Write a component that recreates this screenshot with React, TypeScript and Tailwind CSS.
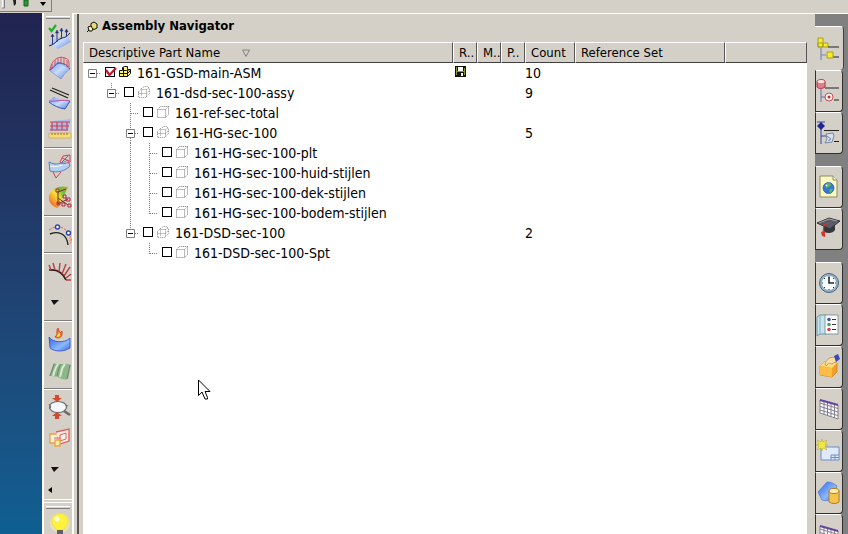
import React from "react";

type IconProps = { children: React.ReactNode; size?: "sm" | "lg" };

function Icon({ children, size = "lg" }: IconProps) {
  return (
    <svg
      viewBox={size === "lg" ? "0 0 24 24" : "0 0 14 14"}
      className={size === "lg" ? "block h-6 w-6 shrink-0 overflow-visible" : "block h-[14px] w-[14px] shrink-0"}
      fill="none"
      aria-hidden="true"
    >
      {children}
    </svg>
  );
}

/* ---------- toolbar icons ---------- */

const ExamineIcon = () => (
  <Icon>
    <path d="M1 19l6-5 12-5 4 8-13 7z" fill="url(#blueSurface)" />
    <path d="M1 21c6-1 8-7 13-8s5-2 8-5" stroke="#222" />
    <path d="M4.500 20V11M9 17V7M13.500 14V5M18.500 12V6" stroke="#2a3d8a" />
    <path d="M3 11.500L4.500 9 6 11.500zM7.500 8L9 5l1.500 3zM12 6l1.500-3L15 6zM17 7l1.500-3L20 7z" fill="#23307c" stroke="#23307c" strokeWidth=".5" />
    <path d="M1 3l2.500 3L8 0" stroke="#22b024" strokeWidth="2.200" />
  </Icon>
);

const CombIcon = () => (
  <Icon>
    <path d="M1 14c4-2 5-6 9-8l12 7c-4 2-6 6-9 10z" fill="url(#blueSurface)" stroke="#6d86d6" strokeWidth=".6" />
    <path d="M2 14C3 5 10-1 17 2c4 1 4 3 4 9M4 13V8M7 10V4M10 8V2M13 8V1M16 9V2M19 11V4" stroke="#cf4f66" />
    <path d="M2 14c4-2 5-6 9-7 5 0 8 2 11 6" stroke="#4058b8" />
  </Icon>
);

const StripesIcon = () => (
  <Icon>
    <path d="M4 1l17 7M2 3l18 8" stroke="#222" strokeWidth="1.300" />
    <path d="M1 14l5-4c6 3 10 3 16 4l-5 8C11 21 5 19 1 14z" fill="url(#blueSurface)" />
    <path d="M1 14c7 1 13-2 21 0" stroke="#b04ca8" />
    <path d="M1 15c5 4 10 6 16 7l5-8" stroke="#3654b8" />
  </Icon>
);

const RulerSurfaceIcon = () => (
  <Icon>
    <path d="M1 13L5 3l18-2-3 12z" fill="#a9bbe6" />
    <path d="M2 4h20M2 12h18M4 4v8M9 4v8M14 4v8M19 4v8M2 8h19" stroke="#d04354" strokeWidth="1.200" />
    <path d="M1 15h22v5H1z" fill="#f4dd76" stroke="#d2a83c" strokeWidth=".7" />
    <path d="M4 15v2M7 15v2M10 15v2M13 15v2M16 15v2M19 15v2" stroke="#9c6b20" />
  </Icon>
);

const SheetGaugeIcon = () => (
  <Icon>
    <path d="M1 7c7 4 13 1 19-2l2 6c-5 5-12 7-20 5z" fill="#b3d2f2" stroke="#5c7fc8" />
    <path d="M2 11c7 2 12-1 19-4" stroke="#fff" />
    <path d="M5 17l3 6 5-6M12 7l3-6 7-1v7l-7 2zM14 3l7 3M20 1l-6 6" stroke="#c84457" />
  </Icon>
);

const RainbowIcon = () => (
  <Icon>
    <path d="M1 9C4 2 11-1 20 1l-5 11-5 10C4 21 0 16 1 9z" fill="url(#heat)" />
    <path d="M10 5v13l10-5M10 12l10 7M10 6l8-3" stroke="#632" />
    <path d="M8 3h3v3H8zM9 16h3v3H9zM15 9h3v3h-3zM18 12h4v3h-4zM14 17h3v3h-3zM20 18h3v3h-3z" stroke="#b32a3d" />
  </Icon>
);

const CurveIcon = () => (
  <Icon>
    <path d="M1 7c8-6 17-4 22 8v5" stroke="#dd6a62" strokeDasharray="3 1" />
    <path d="M2 11c10-4 17 1 18 11" stroke="#1c2420" strokeWidth="1.400" />
    <circle cx="9.500" cy="4" r="2" fill="#fff" stroke="#3241ae" strokeWidth="1.400" />
    <circle cx="20.500" cy="10" r="2" fill="#fff" stroke="#3241ae" strokeWidth="1.400" />
    <path d="M22 14v7" stroke="#eda142" strokeDasharray="2 1" />
  </Icon>
);

const PeakIcon = () => (
  <Icon>
    <path d="M1 10c8-1 14 3 17 10" stroke="#2b1816" strokeWidth="1.600" />
    <path d="M3 10L1 5M7 10L5 3M11 12l1-9M14 14l4-10M16 16l6-9M18 18l5-4M18 20h5" stroke="#bb3e3e" strokeWidth="1.400" />
  </Icon>
);

const FlameSheetIcon = () => (
  <Icon>
    <path d="M1 9c3 5 15 7 21 1v10c-6 4-15 4-20 0z" fill="url(#deepBlue)" stroke="#2b4ed4" strokeWidth=".8" />
    <path d="M10 0c-3 4 1 5-3 9 5 3 8-1 7-6l-2 2z" fill="#f17a20" stroke="#c3361a" strokeWidth=".7" />
    <path d="M9 9c0-3 2-3 2-5 2 3 1 5-2 5z" fill="#ffe05a" />
  </Icon>
);

const GreenSheetIcon = () => (
  <Icon>
    <path d="M1 17C3 14 4 8 6 4c5 3 10-1 17 2l-3 14c-6 2-10-4-19-3z" fill="#8fb58b" />
    <path d="M5 17c2-6 2-8 5-12M12 18c2-6 1-9 5-13" stroke="#d7ecd2" strokeWidth="2" />
    <path d="M2 17C4 12 5 8 6 5M9 17c1-5 2-9 4-12M19 20l3-14" stroke="#557f58" strokeWidth=".8" />
  </Icon>
);

const LensIcon = () => (
  <Icon>
    <path d="M16 15l6 4" stroke="#6a6a6a" strokeWidth="2.400" />
    <ellipse cx="10" cy="11" rx="8.500" ry="5.500" fill="#f4f8fb" stroke="#65706f" strokeWidth="1.200" />
    <path d="M7-1h4v3h3L9 6 4 2h3zM7 23h4v-3h3l-5-4-5 4h3z" fill="#d8482d" />
    <path d="M1 8l2 3-2 2M17 9l3 1" stroke="#676" />
  </Icon>
);

const SectionsIcon = () => (
  <Icon>
    <path d="M2 7h8v9H2z" fill="#f9f0e6" stroke="#e2a344" strokeWidth="1.300" />
    <path d="M8 5l13-3v12l-9 3" fill="#fbe9df" stroke="#dc5f58" strokeWidth="1.300" />
    <path d="M12 8l6-2v6l-6 2zM6 11h7" fill="#f7f0ea" stroke="#d46b60" />
    <path d="M7 13h5v6H7z" fill="#fae6b8" stroke="#eaa53c" strokeWidth="1.300" />
  </Icon>
);

const BulbIcon = () => (
  <Icon>
    <circle cx="12" cy="10" r="10" fill="#fff79a" opacity=".45" />
    <path d="M8 17c0-3-4-4-4-9a8 7.500 0 0116 0c0 5-4 6-4 9z" fill="#fff23f" stroke="#eadf35" strokeWidth=".7" />
    <circle cx="9" cy="6" r="2.500" fill="#fffde0" />
    <path d="M9 17h6v4H9z" fill="#5d5f64" />
    <path d="M10 22h4" stroke="#333" strokeWidth="2" />
  </Icon>
);

const DownArrow = () => (
  <svg viewBox="0 0 24 24" className="block h-6 w-6" aria-hidden="true">
    <path d="M3 9h8l-5 5z" fill="#111" />
  </svg>
);

/* ---------- resource bar icons ---------- */

const AssemblyTabIcon = () => (
  <Icon>
    <path d="M1 1h5v9H1zM1 6h10v4H1zM6 6v4" fill="#f4ec2d" stroke="#a8a11c" />
    <path d="M11 10h11M16 20h6" stroke="#222" strokeWidth="1.200" />
    <path d="M4 11v12M4 18h5" stroke="#7c86b4" strokeWidth="1.200" />
    <path d="M10 15h6v6h-6z" fill="#f4ec2d" stroke="#a8a11c" />
  </Icon>
);

const ConstraintTabIcon = () => (
  <Icon>
    <path d="M1 2c3-2 6-2 8 0v6c-3 2-6 2-8 0z" fill="#e0808a" stroke="#a43443" />
    <ellipse cx="5" cy="2.500" rx="3.500" ry="1.500" fill="#ffe4e4" />
    <path d="M9 9h14M18 21h5" stroke="#222" />
    <path d="M5 10v13M5 18h4" stroke="#6570ac" />
    <circle cx="13" cy="18" r="4" fill="#fff3f0" stroke="#c94c50" />
    <circle cx="13" cy="18" r="1.500" fill="#ba3037" />
  </Icon>
);

const PartTabIcon = () => (
  <Icon>
    <path d="M1 1h8M5 1v22M5 15h5" stroke="#3c46a0" />
    <path d="M5 1l4 4-4 4-4-4z" fill="#1f2394" />
    <path d="M8 9.500h15M18 20.500h5" stroke="#222" />
    <path d="M10 13l7-1 1 3-2 6-7 1 2-4z" fill="#d8e0f0" stroke="#7986a0" />
    <path d="M11 15l4 3-3 2" stroke="#7986a0" />
  </Icon>
);

const WebPageIcon = () => (
  <Icon>
    <path d="M4 1h13l4 4v17H4z" fill="#fbf9c2" stroke="#8b8a64" />
    <path d="M17 1v4h4" fill="#fff" stroke="#8b8a64" />
    <circle cx="12.500" cy="13" r="5.500" fill="#3976cf" stroke="#28509b" strokeWidth=".7" />
    <path d="M9 10c3-3 6-2 6 0s-4 1-4 4zM14 14l3 0-2 4-2-1z" fill="#55b766" />
    <circle cx="10.500" cy="10.500" r="1" fill="#d9f4ff" />
  </Icon>
);

const GraduateIcon = () => (
  <Icon>
    <path d="M7 9l1 6c5 2 9 1 11-2V7z" fill="#34383c" />
    <path d="M1 6l12-5 11 3-10 8z" fill="#575d64" stroke="#30353b" />
    <path d="M3 6l10-4 8 2" stroke="#a0a6ab" />
    <path d="M13 6L8 8l-1 8" stroke="#d8342f" strokeWidth="1.200" />
    <path d="M5 15l4-1v6l-3-1z" fill="#d8342f" />
  </Icon>
);

const ClockIcon = () => (
  <Icon>
    <circle cx="13" cy="12" r="9.500" fill="#8fb4cf" stroke="#4c6478" />
    <circle cx="13" cy="12" r="7.500" fill="#fbfdff" stroke="#7190a6" strokeWidth=".6" />
    <path d="M13 6v6h5" stroke="#202832" strokeWidth="1.600" />
    <path d="M13 5v1M13 18v1M6 12h1M19 12h1M8 7l1 1M18 7l-1 1M8 17l1-1M18 17l-1-1" stroke="#2d3b4c" />
  </Icon>
);

const RolesIcon = () => (
  <Icon>
    <path d="M1 4l3-2h6v19H4l-3 2z" fill="#c6e3ec" stroke="#52849a" strokeWidth=".8" />
    <path d="M4 2v19" stroke="#87aebd" />
    <path d="M9 2h13v19H9z" fill="#fff" stroke="#65859b" strokeWidth=".8" />
    <circle cx="13" cy="6.500" r="1.800" fill="#494fb8" />
    <circle cx="13" cy="11.500" r="1.800" fill="#3da65d" />
    <circle cx="13" cy="16.500" r="1.800" fill="#d04150" />
    <path d="M16 6.500h4M16 11.500h4M16 16.500h4" stroke="#333" />
  </Icon>
);

const HandBoxIcon = () => (
  <Icon>
    <path d="M4 11l4-4 13 1v9l-5 5-12-2z" fill="#f0a028" stroke="#c47a18" strokeWidth=".7" />
    <path d="M4 11l4-4 13 1-5 5z" fill="#ffd97a" />
    <path d="M4 11l12 2v9L4 20z" fill="#fbbd45" />
    <path d="M9 8l4-5 6-1 2 4-5 3-3-1-3 3z" fill="#fbdca6" stroke="#c18a45" strokeWidth=".7" />
    <path d="M18 1l4-2 2 5-4 3z" fill="#354bb6" />
  </Icon>
);

const GridIcon = () => (
  <Icon>
    <path d="M4 3l18 5v14L4 16z" fill="#fafafe" stroke="#84808f" />
    <path d="M4 6l18 5.500M4 9.500l18 5.500M4 13l18 5.500M8 4v14M11.500 5v14M15 6v14M18.500 7v14" stroke="#84808f" />
    <path d="M4 3l18 5" stroke="#6444a0" strokeWidth="2" />
  </Icon>
);

const NewSheetIcon = () => (
  <Icon>
    <path d="M5 8h18v13H5z" fill="#e1eafb" stroke="#6e8cc5" />
    <path d="M15 16h8M15 16v5M15 18.500h8M19 16v5" stroke="#6e8cc5" />
    <path d="M6 0l1 3 4-2-2 4 3 1-3 1 2 4-4-2-1 3-1-3-4 2 2-4-3-1 3-1-2-4 4 2z" fill="#eee842" stroke="#aca628" strokeWidth=".5" />
  </Icon>
);

const ShapesIcon = () => (
  <Icon>
    <path d="M2 11l9-10c5 0 7 2 10 4l-5 13c-4 2-7 2-10 1z" fill="url(#deepBlue)" stroke="#4b77cd" strokeWidth=".7" />
    <path d="M13 10v11c3 2 7 2 10 0V10z" fill="#f6c44e" stroke="#b17e20" />
    <ellipse cx="18" cy="10" rx="5" ry="2.500" fill="#fff0ae" stroke="#b17e20" />
  </Icon>
);

/* ---------- tree icons ---------- */

const AssemblyIcon = () => (
  <Icon size="sm">
    <path d="M1.500 5.500h3v-3l2-1h3v3h3v4l-3 3h-8z" fill="#fff56b" stroke="#111" />
    <path d="M1.500 8.500h8M5.500 2.500v9M5.500 5.500h3l4-1M9.500 8.500l3-3M9.500 5.500v6" stroke="#111" />
  </Icon>
);

const GhostAssemblyIcon = () => (
  <Icon size="sm">
    <path d="M1.500 6.500l3-3 3-2h3l2 2v5l-4 4h-7zM1.500 8.500h7M4.500 3.500v8M5.500 4.500h4v7M9.500 4.500l3-2M9.500 8.500l3-3" stroke="#888" strokeDasharray="1 1" />
  </Icon>
);

const GhostPartIcon = () => (
  <Icon size="sm">
    <path d="M1.500 4.500h8v8h-8zM1.500 4.500l3-3h8l-3 3M12.500 1.500v8l-3 3" stroke="#777" strokeDasharray="1 1" />
  </Icon>
);

const SaveIcon = () => (
  <svg viewBox="0 0 11 11" className="ml-[2px] block h-[11px] w-[11px]" aria-label="Modified" role="img">
    <path d="M0 0h11v11H0z" fill="#111" />
    <path d="M1 1h1v8H1zM9 2h1v7H9zM2 5h7v1H2z" fill="#8b9a20" />
    <path d="M3 1h5v4H3zM6 7h2v3H6z" fill="#fff" />
  </svg>
);

/* ---------- data ---------- */

const toolGroups = [
  [
    { label: "Examine Geometry", icon: <ExamineIcon /> },
    { label: "Surface Comb", icon: <CombIcon /> },
    { label: "Reflection", icon: <StripesIcon /> },
    { label: "Section Measure", icon: <RulerSurfaceIcon /> },
  ],
  [
    { label: "Gap Check", icon: <SheetGaugeIcon /> },
    { label: "Face Analysis", icon: <RainbowIcon /> },
  ],
  [{ label: "Curve Analysis", icon: <CurveIcon /> }],
  [
    { label: "Curvature Comb", icon: <PeakIcon /> },
    { label: "More curve tools", icon: <DownArrow /> },
  ],
  [
    { label: "Draft Analysis", icon: <FlameSheetIcon /> },
    { label: "Sheet Analysis", icon: <GreenSheetIcon /> },
  ],
  [
    { label: "Inspect", icon: <LensIcon /> },
    { label: "Sections", icon: <SectionsIcon /> },
    { label: "More tools", icon: <DownArrow /> },
  ],
];

const tabGroups = [
  [
    { label: "Constraint Navigator", icon: <ConstraintTabIcon /> },
    { label: "Part Navigator", icon: <PartTabIcon /> },
  ],
  [
    { label: "Internet Explorer", icon: <WebPageIcon /> },
    { label: "Training", icon: <GraduateIcon /> },
  ],
  [
    { label: "History", icon: <ClockIcon /> },
    { label: "Roles", icon: <RolesIcon /> },
    { label: "Reuse Library", icon: <HandBoxIcon /> },
    { label: "Sheets", icon: <GridIcon /> },
    { label: "New Sheet", icon: <NewSheetIcon /> },
    { label: "Shapes", icon: <ShapesIcon /> },
    { label: "Tables", icon: <GridIcon /> },
  ],
];

// One guide letter per indent step: "." empty, "|" line, "T" branch, "L" last branch,
// "r" root box, "e" box on the last branch, "b" box with siblings below.
type Row = { name: string; guides: string; kind: "root" | "asm" | "part"; count?: number };

const rows: Row[] = [
  { name: "161-GSD-main-ASM", guides: "r", kind: "root", count: 10 },
  { name: "161-dsd-sec-100-assy", guides: ".e", kind: "asm", count: 9 },
  { name: "161-ref-sec-total", guides: "..T", kind: "part" },
  { name: "161-HG-sec-100", guides: "..b", kind: "asm", count: 5 },
  { name: "161-HG-sec-100-plt", guides: "..|T", kind: "part" },
  { name: "161-HG-sec-100-huid-stijlen", guides: "..|T", kind: "part" },
  { name: "161-HG-sec-100-dek-stijlen", guides: "..|T", kind: "part" },
  { name: "161-HG-sec-100-bodem-stijlen", guides: "..|L", kind: "part" },
  { name: "161-DSD-sec-100", guides: "..e", kind: "asm", count: 2 },
  { name: "161-DSD-sec-100-Spt", guides: "...L", kind: "part" },
];

const guidePaths: Record<string, string> = {
  ".": "",
  "|": "M9.5 0V20",
  T: "M9.5 0V20M10 10.5H18",
  L: "M9.5 0V11M10 10.5H18",
  r: "M14 10.5H18",
  e: "M9.5 0V6M14 10.5H18",
  b: "M9.5 0V6M9.5 15V20M14 10.5H18",
};

function Guide({ type }: { type: string }) {
  const drawing = (
    <svg viewBox="0 0 19 20" className="block h-5 w-[19px]" fill="none" aria-hidden="true">
      <path d={guidePaths[type]} stroke="#808080" strokeDasharray="1 1" />
      {"reb".includes(type) && (
        <>
          <path d="M5.500 6.500h8v8h-8z" fill="#fff" stroke="#808080" />
          <path d="M7 10.500h5" stroke="#000" />
        </>
      )}
    </svg>
  );
  if ("reb".includes(type)) {
    return <button type="button" aria-label="Collapse" className="shrink-0">{drawing}</button>;
  }
  return <span className="shrink-0">{drawing}</span>;
}

function TreeRow({ row }: { row: Row }) {
  return (
    <tr className="h-5">
      <td className="p-0">
        <div className="flex h-5 items-center">
          {row.guides.split("").map((g, i) => (
            <Guide key={i} type={g} />
          ))}
          <label className="flex items-center">
            <span className="relative ml-[3px] w-[13px] shrink-0 pb-[3px]">
              <input
                type="checkbox"
                defaultChecked={row.kind === "root"}
                className="block h-[10px] w-[10px] appearance-none border border-black bg-white"
              />
              {row.kind === "root" && (
                <svg viewBox="0 0 12 12" className="pointer-events-none absolute top-0 left-0 h-3 w-3" fill="none" aria-hidden="true">
                  <path d="M1 3l3.500 5L11 1" stroke="#c01828" strokeWidth="2.200" />
                </svg>
              )}
            </span>
            <span className="mr-[5px] pb-[3px]">
              {row.kind === "root" && <AssemblyIcon />}
              {row.kind === "asm" && <GhostAssemblyIcon />}
              {row.kind === "part" && <GhostPartIcon />}
            </span>
            <span className="whitespace-nowrap">{row.name}</span>
          </label>
        </div>
      </td>
      <td className="p-0 pb-[3px]">{row.kind === "root" && <SaveIcon />}</td>
      <td className="p-0" />
      <td className="p-0" />
      <td className="p-0">{row.count}</td>
      <td className="p-0" />
      <td className="p-0" />
    </tr>
  );
}

const headCell =
  "h-[21px] overflow-hidden whitespace-nowrap border-t border-r border-b border-l border-t-white border-r-[#555] border-b-[#404040] border-l-white bg-[#d4d0c8] p-0 pl-[5px] text-left text-[13px] font-normal leading-[18px]";

function NavigatorTable() {
  return (
    <table className="w-full table-fixed border-separate border-spacing-0">
      <colgroup>
        <col className="w-[370px]" />
        <col className="w-6" />
        <col className="w-6" />
        <col className="w-6" />
        <col className="w-[50px]" />
        <col className="w-[150px]" />
        <col />
      </colgroup>
      <thead>
        <tr>
          <th className={headCell}>
            <span className="flex items-center gap-[22px]">
              Descriptive Part Name
              <svg viewBox="0 0 8 8" className="h-2 w-2" fill="none" aria-hidden="true">
                <path d="M.5 1h7L4 7.500z" stroke="#808080" />
              </svg>
            </span>
          </th>
          <th className={headCell}>R..</th>
          <th className={headCell}>M..</th>
          <th className={headCell}>P..</th>
          <th className={headCell}>Count</th>
          <th className={headCell}>Reference Set</th>
          <th className={headCell} />
        </tr>
      </thead>
      <tbody>
        {rows.map((row) => (
          <TreeRow key={row.name} row={row} />
        ))}
      </tbody>
    </table>
  );
}

function Grip() {
  return <div className="mx-[2px] h-[3px] border-t border-b border-t-white border-b-[#808080]" />;
}

function Toolbar() {
  return (
    <aside className="flex w-8 shrink-0 flex-col border-r-2 border-l-2 border-white bg-[#d4d0c8]">
      <div className="border-b border-white pt-[3px]">
        <Grip />
        {toolGroups.map((group, i) => (
          <div key={i} className={i === 0 ? "py-[2px]" : "border-t border-[#808080]"}>
            <div className={i === 0 ? "" : "border-t border-white py-[2px]"}>
              {group.map((tool) => (
                <button key={tool.label} type="button" aria-label={tool.label} className="flex h-[31px] w-full items-center pl-1">
                  {tool.icon}
                </button>
              ))}
            </div>
          </div>
        ))}
        <button type="button" aria-label="Toolbar options" className="flex h-3 w-full items-start pl-1">
          <svg viewBox="0 0 4 6" className="h-[6px] w-1" aria-hidden="true">
            <path d="M4 0v6L0 3z" fill="#000" />
          </svg>
        </button>
      </div>
      <div className="mt-[2px] border-t border-white pt-[3px]">
        <Grip />
        <button type="button" aria-label="Tips" className="flex h-[31px] w-full items-center pl-1">
          <BulbIcon />
        </button>
      </div>
    </aside>
  );
}

function ResourceBar() {
  return (
    <nav className="flex w-[33px] shrink-0 flex-col gap-3 overflow-hidden bg-[#808080] pt-3" aria-label="Resource bar">
      {tabGroups.map((group, i) => (
        <div key={i} className="flex flex-col items-start">
          {i === 0 && (
            <button type="button" aria-label="Assembly Navigator" className="flex h-11 w-[29px] items-center rounded-r border-t border-r border-t-white border-r-[#404040] bg-[#d4d0c8] pl-[2px]">
              <AssemblyTabIcon />
            </button>
          )}
          {group.map((tab) => (
            <button
              key={tab.label}
              type="button"
              aria-label={tab.label}
              className="flex h-[42px] w-7 shrink-0 items-center rounded-r border border-t-white border-r-[#303030] border-b-[#303030] border-l-[#303030] bg-[#d4d0c8]"
            >
              {tab.icon}
            </button>
          ))}
        </div>
      ))}
    </nav>
  );
}

function Gradients() {
  return (
    <svg className="absolute h-0 w-0" aria-hidden="true">
      <defs>
        <linearGradient id="blueSurface" x1="0" y1="0" x2="1" y2="1">
          <stop offset="0" stopColor="#6f97ea" />
          <stop offset=".5" stopColor="#c9dcfa" />
          <stop offset="1" stopColor="#5a80dc" />
        </linearGradient>
        <linearGradient id="deepBlue" x1="0" y1="0" x2="1" y2="1">
          <stop offset="0" stopColor="#2f62e8" />
          <stop offset=".6" stopColor="#8db8fb" />
          <stop offset="1" stopColor="#3f6ee0" />
        </linearGradient>
        <linearGradient id="heat" x1="0" y1="1" x2="1" y2="0">
          <stop offset="0" stopColor="#e8402a" />
          <stop offset=".3" stopColor="#f8a030" />
          <stop offset=".5" stopColor="#f8e034" />
          <stop offset=".75" stopColor="#5dc63c" />
          <stop offset="1" stopColor="#f09030" />
        </linearGradient>
      </defs>
    </svg>
  );
}

export default function App() {
  return (
    <div className="relative flex h-screen flex-col overflow-hidden bg-[#d4d0c8] font-['DejaVu_Sans_Condensed','DejaVu_Sans',sans-serif] text-[14px] leading-5 text-black">
      <Gradients />

      <header className="flex h-[13px] shrink-0 bg-[#d4d0c8]">
        <div className="h-3 w-[52px] border-r border-b border-[#808080]">
          <svg viewBox="0 0 51 11" className="block h-[11px] w-[51px]" fill="none" aria-hidden="true">
            <path d="M2.500 0v8M4.500 0v8" stroke="#fff" />
            <path d="M4.500 0v8H2" stroke="#808080" />
            <path d="M13 0h3v4l-2 2z" fill="#222" />
            <path d="M24 0h4v6h-4z" fill="#2d9b34" stroke="#155c1b" />
            <path d="M40 2h6l-3 4z" fill="#000" />
          </svg>
        </div>
      </header>

      <main className="flex min-h-0 flex-1">
        <div className="w-[42px] shrink-0 bg-linear-to-b from-[#20234f] to-[#0e5f92]" />
        <Toolbar />
        <div className="flex min-w-0 flex-1 border-t border-white">
          <section className="ml-[3px] flex min-w-0 flex-1 flex-col border-l-2 border-[#555] pr-2 pl-1">
            <h1 className="flex h-7 shrink-0 items-center gap-1 pb-1 pl-1 text-[13px] font-bold">
              <svg viewBox="0 0 11 11" className="h-[11px] w-[11px]" fill="none" aria-hidden="true">
                <path d="M4 2.500L7 1l3 2v4L7 8.500 4 7z" fill="#e8de70" stroke="#111" />
                <path d="M1 6l3-1 2 3-1 2H2z" fill="#f6f0a0" stroke="#111" />
                <path d="M0 11l2-2" stroke="#111" />
              </svg>
              Assembly Navigator
            </h1>
            <div className="flex-1 bg-white">
              <NavigatorTable />
            </div>
          </section>
          <ResourceBar />
        </div>
      </main>

      {/* mouse pointer */}
      <svg viewBox="0 0 13 21" className="pointer-events-none absolute top-[379px] left-[198px] h-[21px] w-[13px]" aria-hidden="true">
        <path d="M.5 1v15.500l3.500-3.500 3 7h2.500v-1.500l-2.500-6h5z" fill="#fff" stroke="#000" />
      </svg>
    </div>
  );
}
